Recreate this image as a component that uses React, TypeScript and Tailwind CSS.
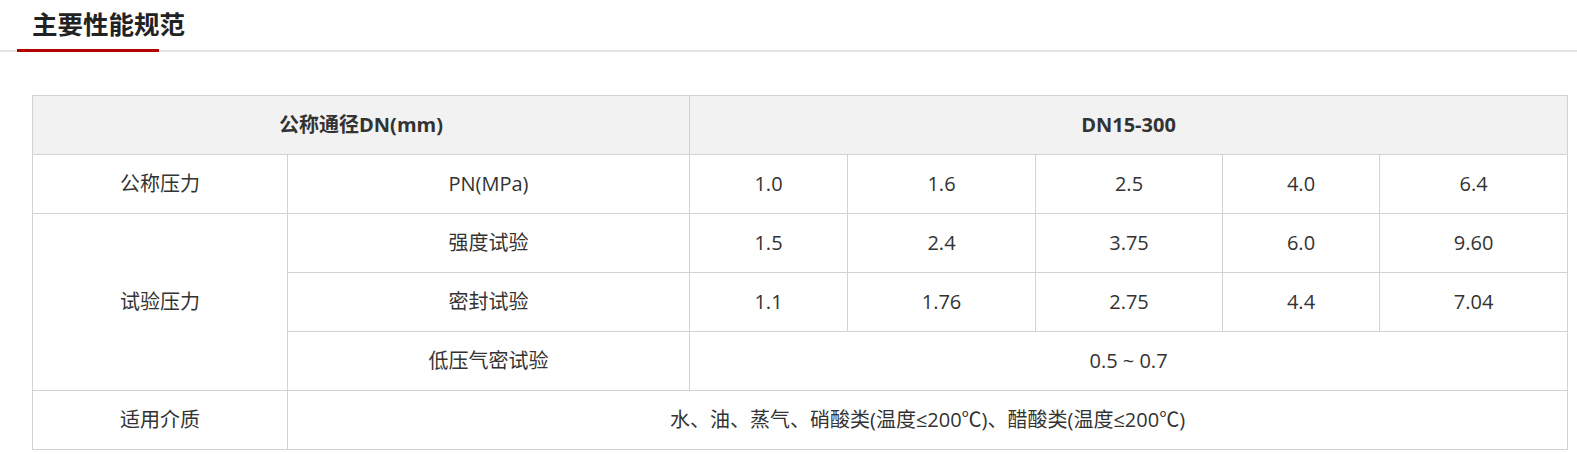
const cell = "border border-[#d2d2d2] h-[59px] p-0 text-center align-middle";

const pressureRows = [
  { label: "强度试验", values: ["1.5", "2.4", "3.75", "6.0", "9.60"] },
  { label: "密封试验", values: ["1.1", "1.76", "2.75", "4.4", "7.04"] },
];

export default function App() {
  return (
    <div
      className="bg-white text-[#333] min-h-[454px]"
      style={{ fontFamily: '"Open Sans", "Noto Sans CJK SC", sans-serif' }}
    >
      <div className="border-b-2 border-[#e3e3e3]">
        <h2 className="ml-[17px] w-[142px] pl-[15px] h-[52px] leading-[49px] -mb-[2px] border-b-[3px] border-[#b30000] text-[25.5px] font-bold text-[#222] whitespace-nowrap">
          主要性能规范
        </h2>
      </div>

      <div className="mt-[43px] ml-[32px] mr-[10px]">
        <table className="w-full table-fixed border-collapse text-[20px]">
          <colgroup>
            <col className="w-[255px]" />
            <col className="w-[402px]" />
            <col className="w-[158px]" />
            <col className="w-[188px]" />
            <col className="w-[187px]" />
            <col className="w-[157px]" />
            <col className="w-[188px]" />
          </colgroup>
          <tbody>
            <tr className="bg-[#f2f2f2] font-bold">
              <td colSpan={2} className={cell}>公称通径DN(mm)</td>
              <td colSpan={5} className={cell}>DN15-300</td>
            </tr>
            <tr>
              <td className={cell}>公称压力</td>
              <td className={cell}>PN(MPa)</td>
              {["1.0", "1.6", "2.5", "4.0", "6.4"].map((v) => (
                <td key={v} className={cell}>{v}</td>
              ))}
            </tr>
            {pressureRows.map((row, i) => (
              <tr key={row.label}>
                {i === 0 && (
                  <td rowSpan={3} className={cell}>试验压力</td>
                )}
                <td className={cell}>{row.label}</td>
                {row.values.map((v) => (
                  <td key={v} className={cell}>{v}</td>
                ))}
              </tr>
            ))}
            <tr>
              <td className={cell}>低压气密试验</td>
              <td colSpan={5} className={cell}>0.5 ~ 0.7</td>
            </tr>
            <tr>
              <td className={cell}>适用介质</td>
              <td colSpan={6} className={cell}>
                水、油、蒸气、硝酸类(温度≤200℃)、醋酸类(温度≤200℃)
              </td>
            </tr>
          </tbody>
        </table>
      </div>
    </div>
  );
}
